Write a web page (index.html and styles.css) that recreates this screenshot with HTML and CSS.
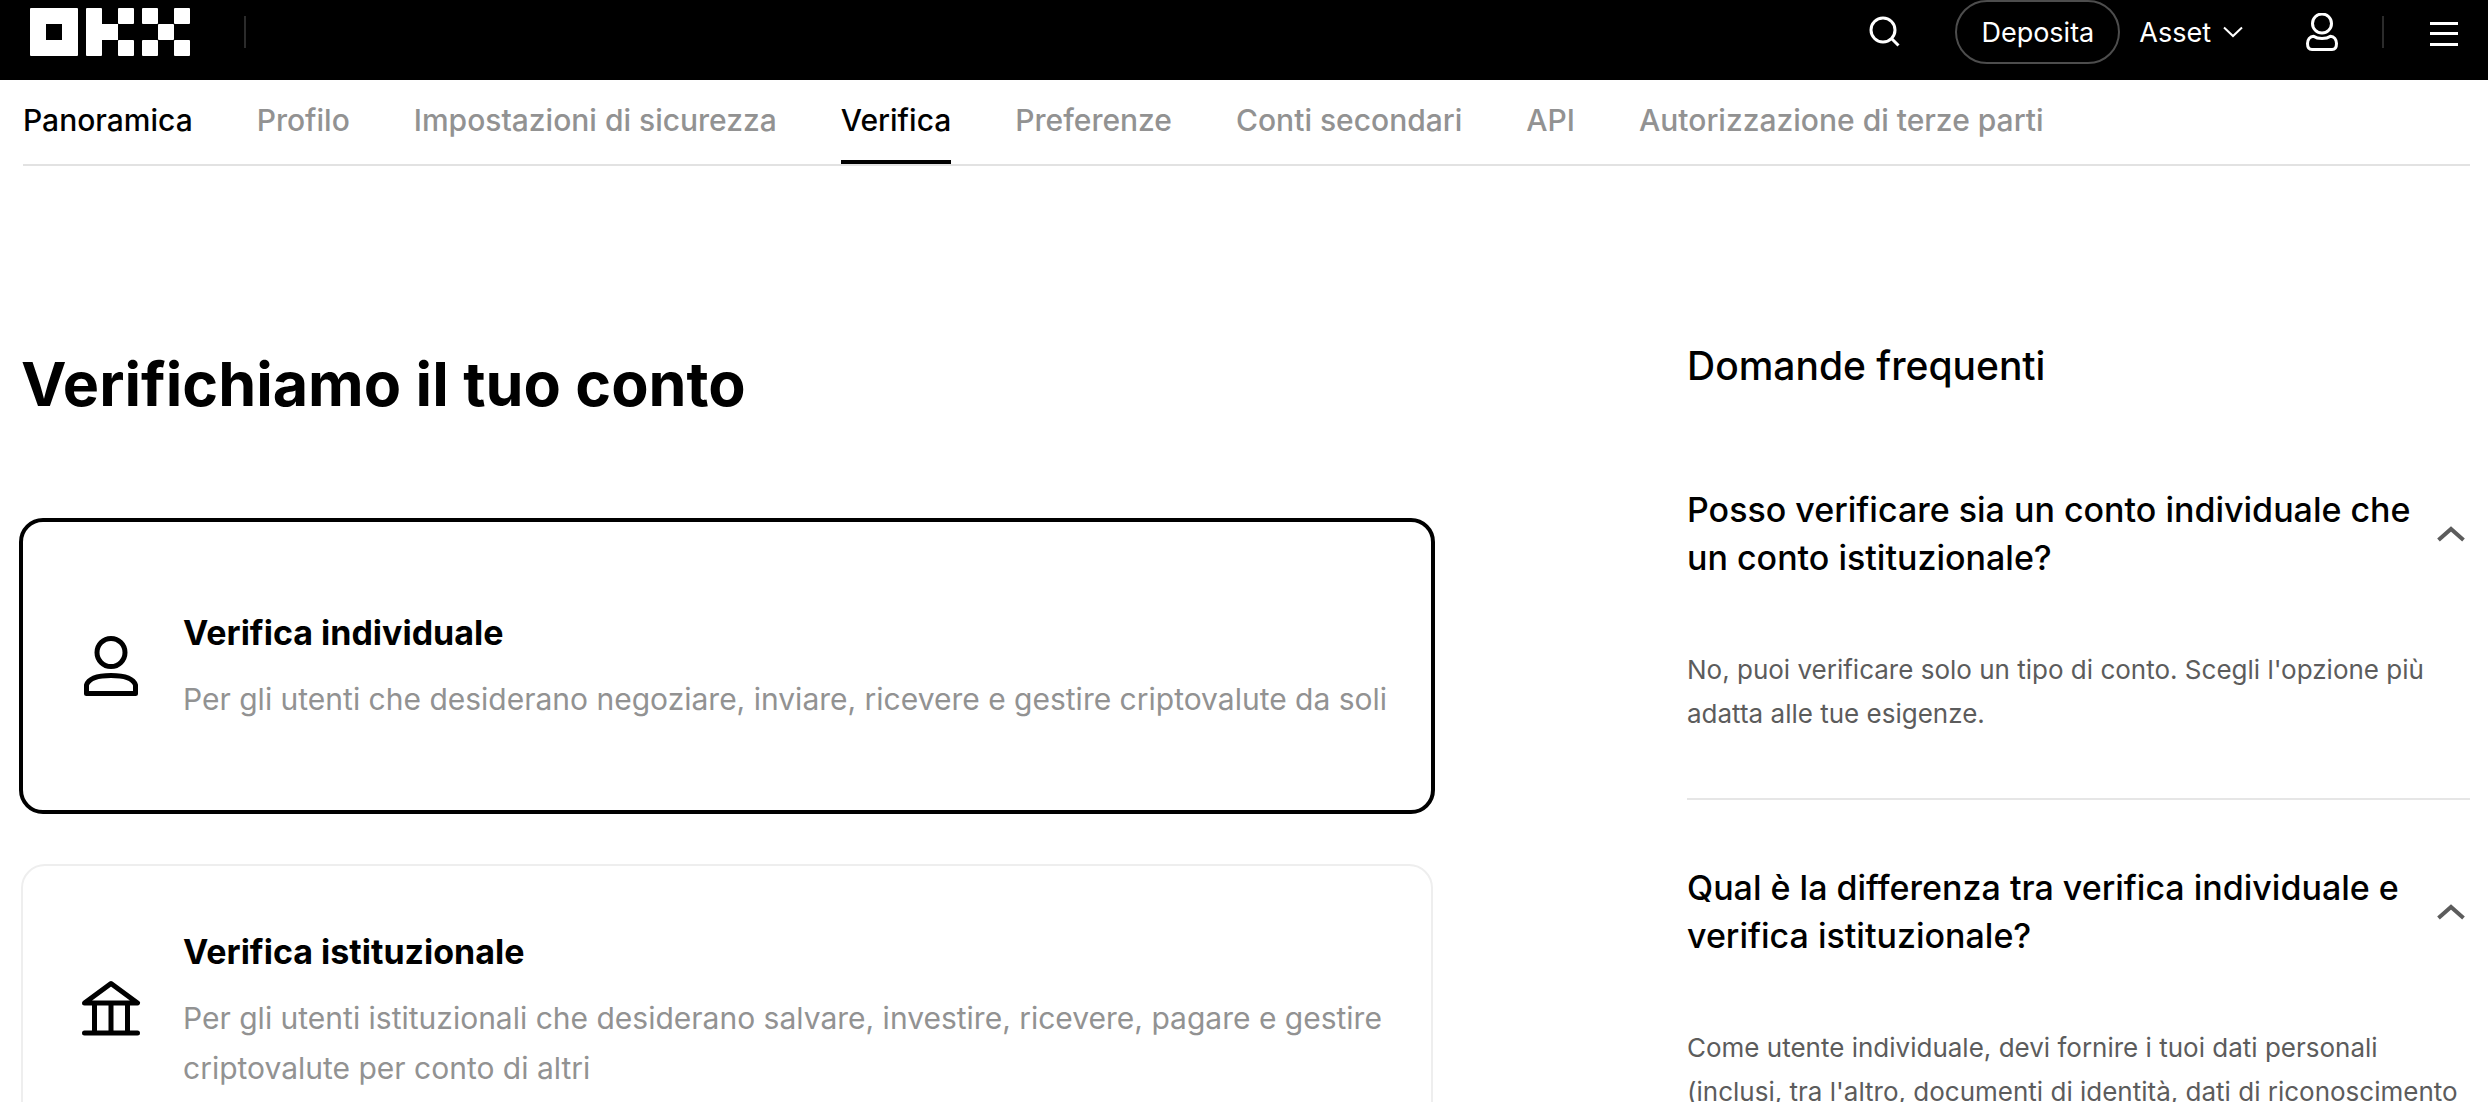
FILE: index.html
```html
<!DOCTYPE html>
<html lang="it">
<head>
    <meta charset="UTF-8">
    <meta name="viewport" content="width=device-width, initial-scale=1.0">
    <title>Verifica | OKX</title>
    <link rel="stylesheet" href="styles.css">
</head>
<body>
    <header class="topbar">
        <a href="#" class="logo" aria-label="OKX">
            <svg width="160" height="48" viewBox="0 0 160 48" fill="#fff">
                <path fill-rule="evenodd" d="M1 0H47a1 1 0 0 1 1 1V47a1 1 0 0 1-1 1H1a1 1 0 0 1-1-1V1a1 1 0 0 1 1-1zM16 16V32H32V16z"/>
                <rect x="56" width="16" height="48" rx="1"/>
                <rect x="71" y="16" width="17" height="16"/>
                <rect x="88" width="16" height="16" rx="1"/>
                <rect x="88" y="32" width="16" height="16" rx="1"/>
                <rect x="112" width="16" height="16" rx="1"/>
                <rect x="144" width="16" height="16" rx="1"/>
                <rect x="128" y="16" width="16" height="16" rx="1"/>
                <rect x="112" y="32" width="16" height="16" rx="1"/>
                <rect x="144" y="32" width="16" height="16" rx="1"/>
            </svg>
        </a>
        <span class="separator"></span>
        <div class="actions">
            <button class="icon-btn search" aria-label="Cerca">
                <svg width="32" height="32" viewBox="0 0 32 32" fill="none" stroke="#fff" stroke-width="3">
                    <circle cx="14" cy="14" r="12"/>
                    <path d="M22.500 22.500L29.500 29.500"/>
                </svg>
            </button>
            <button class="deposit">Deposita</button>
            <button class="asset">Asset
                <svg width="20" height="12" viewBox="0 0 20 12" fill="none" stroke="#fff" stroke-width="2">
                    <path d="M1 1.500L10 10L19 1.500"/>
                </svg>
            </button>
            <button class="icon-btn user" aria-label="Profilo utente">
                <svg width="32" height="38" viewBox="0 0 32 38" fill="none" stroke="#fff" stroke-width="3">
                    <circle cx="16" cy="10.500" r="9.500"/>
                    <path d="M7.500 23.200C10 25 13 25.500 16 25.500S22 25 24.500 23.200C28 23.200 30.500 26.500 30.500 30.500C30.500 34 29 36.500 26 36.500H6C3 36.500 1.500 34 1.500 30.500C1.500 26.500 4 23.200 7.500 23.200Z" stroke-linejoin="round"/>
                </svg>
            </button>
            <span class="separator"></span>
            <button class="icon-btn menu" aria-label="Menu">
                <svg width="28" height="24" viewBox="0 0 28 24" fill="#fff">
                    <rect width="28" height="3"/>
                    <rect y="10" width="28" height="3"/>
                    <rect y="21" width="28" height="3"/>
                </svg>
            </button>
        </div>
    </header>

    <nav class="tabs">
        <a href="#" class="tab dark">Panoramica</a>
        <a href="#" class="tab">Profilo</a>
        <a href="#" class="tab">Impostazioni di sicurezza</a>
        <a href="#" class="tab dark active">Verifica</a>
        <a href="#" class="tab">Preferenze</a>
        <a href="#" class="tab">Conti secondari</a>
        <a href="#" class="tab">API</a>
        <a href="#" class="tab">Autorizzazione di terze parti</a>
    </nav>

    <main class="content">
        <section class="verify">
            <h1>Verifichiamo il tuo conto</h1>
            <button class="card selected">
                <svg class="card-icon" width="64" height="64" viewBox="0 0 64 64" fill="none" stroke="#000" stroke-width="5">
                    <circle cx="32" cy="18.500" r="14"/>
                    <path d="M7.500 59.500V51C10 43.500 20 41.500 32 41.500S54 43.500 56.500 51V59.500Z" stroke-linejoin="round"/>
                </svg>
                <span class="card-text">
                    <span class="card-title">Verifica individuale</span>
                    <span class="card-desc">Per gli utenti che desiderano negoziare, inviare, ricevere e gestire criptovalute da soli</span>
                </span>
            </button>
            <button class="card">
                <svg class="card-icon" width="64" height="64" viewBox="0 0 64 64" fill="none" stroke="#000" stroke-width="5" stroke-linecap="round" stroke-linejoin="round">
                    <path d="M5.500 25L32 5.500L58.500 25Z"/>
                    <path d="M15.500 26V54M32 26V54M48.500 26V54M5.500 55H58.500"/>
                </svg>
                <span class="card-text">
                    <span class="card-title">Verifica istituzionale</span>
                    <span class="card-desc">Per gli utenti istituzionali che desiderano salvare, investire, ricevere, pagare e gestire criptovalute per conto di altri</span>
                </span>
            </button>
        </section>

        <aside class="faq">
            <h2>Domande frequenti</h2>
            <div class="faq-item">
                <button class="question" aria-expanded="true">
                    <span>Posso verificare sia un conto individuale che un conto istituzionale?</span>
                    <svg width="28" height="16" viewBox="0 0 28 16" fill="none" stroke="#5c5c5c" stroke-width="4">
                        <path d="M1.500 14L14 3L26.500 14"/>
                    </svg>
                </button>
                <p class="answer">No, puoi verificare solo un tipo di conto. Scegli l'opzione più adatta alle tue esigenze.</p>
            </div>
            <div class="faq-item">
                <button class="question" aria-expanded="true">
                    <span>Qual è la differenza tra verifica individuale e verifica istituzionale?</span>
                    <svg width="28" height="16" viewBox="0 0 28 16" fill="none" stroke="#5c5c5c" stroke-width="4">
                        <path d="M1.500 14L14 3L26.500 14"/>
                    </svg>
                </button>
                <p class="answer">Come utente individuale, devi fornire i tuoi dati personali (inclusi, tra l'altro, documenti di identità, dati di riconoscimento</p>
            </div>
        </aside>
    </main>
</body>
</html>
```
FILE: styles.css
```css
* {
    margin: 0;
    padding: 0;
    box-sizing: border-box;
}

body {
    display: flex;
    flex-direction: column;
    height: 100vh;
    overflow: hidden;
    background-color: #fff;
    color: #000;
    font-family: Inter, "Liberation Sans", sans-serif;
}

button {
    border: none;
    background: none;
    color: inherit;
    font-family: inherit;
    text-align: left;
    cursor: pointer;
}

svg {
    display: block;
    flex-shrink: 0;
}

/* Top bar */
.topbar {
    display: flex;
    flex-shrink: 0;
    height: 80px;
    padding: 0 30px;
    background-color: #000;
    color: #fff;
}

.logo {
    margin-top: 8px;
    margin-right: 54px;
}

.separator {
    width: 2px;
    height: 32px;
    margin-top: 16px;
    background-color: #2b2b2b;
}

.actions {
    display: flex;
    align-items: flex-start;
    margin-left: auto;
}

.icon-btn {
    display: flex;
    align-items: center;
    height: 64px;
}

.search {
    margin-right: 54px;
}

.deposit {
    height: 64px;
    padding: 0 24px;
    border: 2px solid #4d4d4d;
    border-radius: 32px;
    font-size: 27px;
}

.asset {
    display: flex;
    align-items: center;
    gap: 12px;
    height: 64px;
    margin-left: 19px;
    font-size: 27px;
}

.user {
    margin: 0 44px 0 63px;
}

.menu {
    height: 68px;
    margin-left: 46px;
}

/* Tabs */
.tabs {
    display: flex;
    flex-shrink: 0;
    gap: 64px;
    margin: 0 18px 0 23px;
    border-bottom: 2px solid #e2e2e2;
}

.tab {
    border-bottom: 4px solid transparent;
    color: #929292;
    font-size: 30px;
    font-weight: 500;
    line-height: 80px;
    text-decoration: none;
    white-space: nowrap;
}

.tab.dark {
    color: #000;
}

.tab.active {
    border-color: #000;
}

/* Content */
.content {
    display: grid;
    grid-template-columns: 1412fr 783fr;
    column-gap: 254px;
    flex: 1;
    min-height: 0;
    padding: 178px 18px 0 21px;
    overflow: hidden;
}

.verify {
    display: flex;
    flex-direction: column;
}

h1 {
    margin-bottom: 94px;
    font-size: 61px;
    font-weight: 700;
    line-height: 80px;
}

.card {
    display: flex;
    align-items: center;
    gap: 40px;
    min-height: 292px;
    padding: 56px 36px 56px 56px;
    border: 2px solid #eee;
    border-radius: 24px;
}

.card.selected {
    min-height: 296px;
    margin: 0 -2px 50px;
    border: 4px solid #000;
}

.card-text {
    display: flex;
    flex-direction: column;
    gap: 16px;
}

.card-title {
    font-size: 34px;
    font-weight: 700;
    line-height: 50px;
}

.card-desc {
    color: #929292;
    font-size: 30px;
    line-height: 50px;
}

/* FAQ */
h2 {
    margin-bottom: 98px;
    font-size: 39px;
    font-weight: 500;
    line-height: 44px;
}

.faq-item {
    padding-bottom: 62px;
    margin-bottom: 64px;
    border-bottom: 2px solid #e6e6e6;
}

.question {
    display: flex;
    align-items: center;
    justify-content: space-between;
    gap: 16px;
    width: 100%;
    padding-right: 5px;
    margin-bottom: 66px;
    font-size: 34px;
    font-weight: 500;
    line-height: 48px;
}

.answer {
    color: #5c5c5c;
    font-size: 26px;
    line-height: 44px;
}
```
